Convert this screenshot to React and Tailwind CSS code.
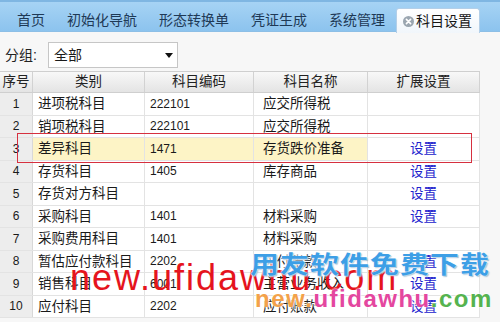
import React from "react";

const rows = [
  ["1", "进项税科目", "222101", "应交所得税", false],
  ["2", "销项税科目", "222101", "应交所得税", false],
  ["3", "差异科目", "1471", "存货跌价准备", true],
  ["4", "存货科目", "1405", "库存商品", true],
  ["5", "存货对方科目", "", "", true],
  ["6", "采购科目", "1401", "材料采购", true],
  ["7", "采购费用科目", "1401", "材料采购", false],
  ["8", "暂估应付款科目", "2202", "应付账款", true],
  ["9", "销售科目", "6001", "主营业务收入", true],
  ["10", "应付科目", "2202", "应付账款", true],
];

const tabs = ["首页", "初始化导航", "形态转换单", "凭证生成", "系统管理"];

export default function App() {
  return (
    <div
      className="relative w-[500px] h-[322px] overflow-hidden bg-[#f7f7f7] text-[#1a1a1a]"
      style={{ fontFamily: '"Liberation Sans", "Noto Sans CJK SC", sans-serif' }}
    >
      {/* tab bar */}
      <div className="flex h-[32px] pl-[6px] border-t-[2px] border-[#7fb6e2] border-b border-b-[#8dbfe6] bg-gradient-to-b from-[#a6d3f4] to-[#8cc3ee]">
        {tabs.map((t) => (
          <div
            key={t}
            className="flex items-center px-[11px] pt-[6px] text-[14px] leading-none text-[#1e3956]"
          >
            {t}
          </div>
        ))}
        <div className="mt-[6px] h-[25px] flex items-center pl-[6px] pr-[7px] rounded-t-[3px] border-x border-t border-[#b3cfe8] bg-gradient-to-b from-[#ffffff] to-[#f1f6fb] text-[14px] leading-none text-[#151515]">
          <svg width="11" height="11" viewBox="0 0 11 11" className="mr-[2px]">
            <circle cx="5.5" cy="5.5" r="5.5" fill="#9ba6b0" />
            <path d="M3.4 3.4 L7.6 7.6 M7.6 3.4 L3.4 7.6" stroke="#ffffff" strokeWidth="1.6" strokeLinecap="round" />
          </svg>
          科目设置
        </div>
      </div>

      {/* filter */}
      <div className="flex h-[39px] pt-[10px] pl-[5px] items-start">
        <div className="w-[43px] h-[26px] flex items-center text-[14px] leading-none text-[#222]">
          分组:
        </div>
        <div className="w-[130px] h-[26px] bg-white border border-[#c6c6c6] flex items-center justify-between pl-[5px] pr-[4px] text-[14px] leading-none">
          <span>全部</span>
          <svg width="8" height="5" viewBox="0 0 8 5">
            <path d="M0 0 H8 L4 5 Z" fill="#111" />
          </svg>
        </div>
      </div>

      {/* table */}
      <div className="w-[480px] text-[13.5px] leading-none">
        <div className="flex h-[22px] border-y border-[#cfcfcf] bg-gradient-to-b from-[#f8f8f8] to-[#e4e4e4] text-[#222]">
          <div className="w-[33px] flex items-center justify-center border-r border-[#d2d2d2]">序号</div>
          <div className="w-[112px] flex items-center justify-center border-r border-[#d2d2d2]">类别</div>
          <div className="w-[109px] flex items-center justify-center border-r border-[#d2d2d2]">科目编码</div>
          <div className="w-[114px] flex items-center justify-center border-r border-[#d2d2d2]">科目名称</div>
          <div className="w-[112px] flex items-center justify-center border-r border-[#d2d2d2]">扩展设置</div>
        </div>
        {rows.map(([no, cat, code, name, link], i) => {
          const hl = i === 2;
          const cellBg = hl ? "bg-[#fdf4c6]" : "bg-white";
          return (
            <div key={no} className="flex h-[22.5px] border-b border-[#e3e3e3]">
              <div className="w-[33px] flex items-center justify-center bg-[#ededed] border-r border-[#d8d8d8] text-[12px]">
                {no}
              </div>
              <div className={`w-[112px] flex items-center pl-[5px] border-r border-[#e3e3e3] ${cellBg}`}>{cat}</div>
              <div className={`w-[109px] flex items-center pl-[5px] border-r border-[#e3e3e3] text-[12px] ${cellBg}`}>{code}</div>
              <div className={`w-[114px] flex items-center pl-[9px] border-r border-[#e3e3e3] ${cellBg}`}>{name}</div>
              <div className="w-[112px] flex items-center justify-center bg-white border-r border-[#e3e3e3] text-[#2020cc]">
                {link ? "设置" : ""}
              </div>
            </div>
          );
        })}
      </div>

      {/* red highlight box */}
      <div className="absolute left-[17px] top-[133px] w-[455px] h-[30px] border-[1.5px] border-[#d6303f]" />

      {/* watermarks */}
      <div
        className="absolute left-[70px] top-[260px] text-[36px] leading-none text-[#e5141d] whitespace-nowrap tracking-[2px]"
        style={{ fontFamily: '"Liberation Sans", sans-serif' }}
      >
        new.ufidawhu.com
      </div>
      <div
        className="absolute left-[250px] top-[251px] text-[24px] leading-none font-bold text-[#3d9fe6] whitespace-nowrap tracking-[1px] origin-left scale-x-[1.2]"
        style={{
          fontFamily: '"Noto Sans CJK SC", sans-serif',
          textShadow: "0 0 2px #fff, 0 0 2px #fff, 1px 1px 1px #7fa9c9",
        }}
      >
        用友软件免费下载
      </div>
      <div
        className="absolute left-[255px] top-[287px] text-[24px] leading-none font-bold whitespace-nowrap tracking-[1.5px]"
        style={{
          fontFamily: '"Liberation Sans", sans-serif',
          textShadow: "0 0 2px #fff, 0 0 2px #fff",
        }}
      >
        <span className="text-[#f3a24a]">new.</span>
        <span className="text-[#e4479f]">ufidawhu</span>
        <span className="text-[#55b34f]">.com</span>
      </div>
    </div>
  );
}
